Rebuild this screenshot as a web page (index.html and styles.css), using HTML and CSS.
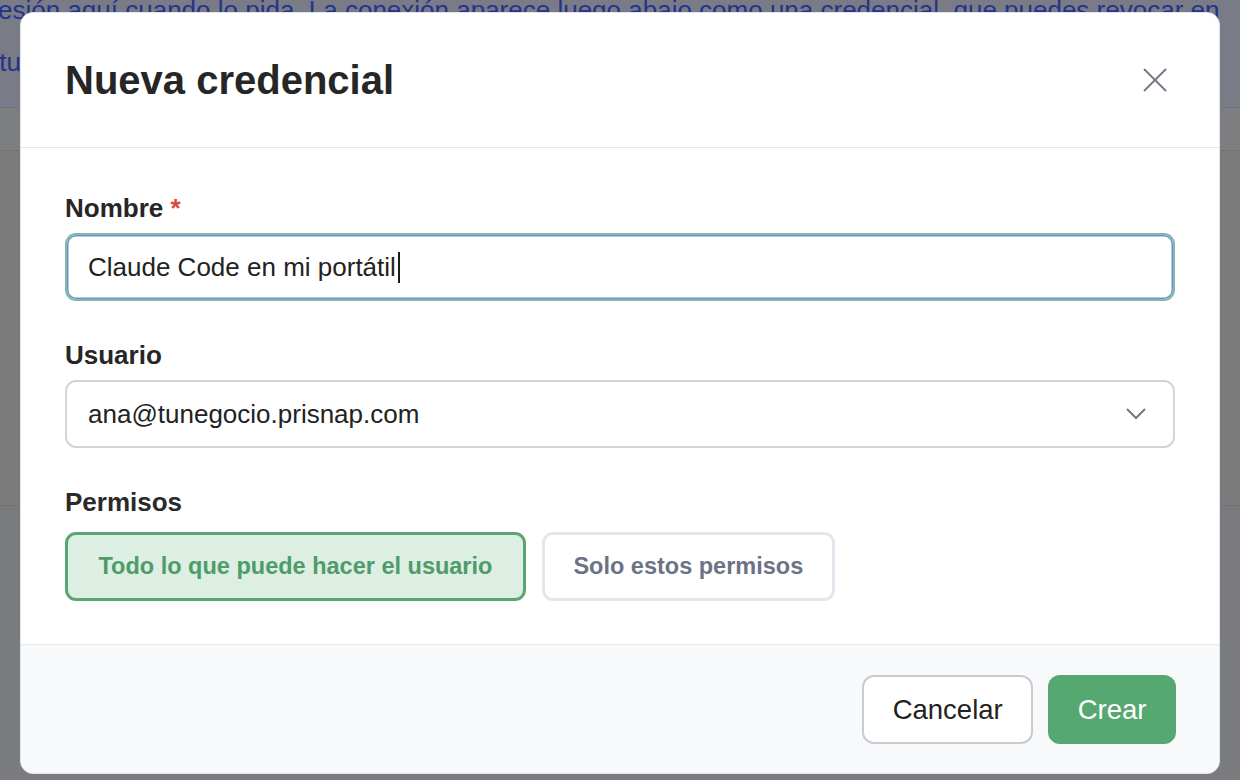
FILE: index.html
```html
<!DOCTYPE html>
<html lang="es">
<head>
<meta charset="utf-8">
<title>Nueva credencial</title>
<link rel="stylesheet" href="styles.css">
</head>
<body>
<div class="page">
  <div class="notice">
    <p class="notice-line first">esión aquí cuando lo pida. La conexión aparece luego abajo como una credencial, que puedes revocar en</p>
    <p class="notice-line second">ftu panel cuando quieras.</p>
  </div>
  <div class="table-head"></div>
  <div class="table-body"></div>
</div>

<div class="modal" role="dialog" aria-labelledby="modal-title">
  <header class="modal-header">
    <h2 id="modal-title" class="modal-title">Nueva credencial</h2>
    <button class="close-btn" aria-label="Cerrar">
      <svg width="24" height="24" viewBox="0 0 24 24" fill="none" stroke="currentColor" stroke-width="1.8" stroke-linecap="round">
        <line x1="1.5" y1="1.5" x2="22.5" y2="22.5"/>
        <line x1="22.5" y1="1.5" x2="1.5" y2="22.5"/>
      </svg>
    </button>
  </header>

  <div class="modal-body">
    <div class="field">
      <div class="label">Nombre <span class="req">*</span></div>
      <div class="input focused">Claude Code en mi portátil<span class="caret"></span></div>
    </div>
    <div class="field">
      <div class="label">Usuario</div>
      <div class="input select">
        <span>ana@tunegocio.prisnap.com</span>
        <svg class="chevron" width="20" height="12" viewBox="0 0 20 12" fill="none" stroke="currentColor" stroke-width="1.8" stroke-linecap="round" stroke-linejoin="round">
          <polyline points="1.5,1.5 10,10 18.5,1.5"/>
        </svg>
      </div>
    </div>
    <div class="field last">
      <div class="label legend">Permisos</div>
      <div class="pills">
        <button class="pill active">Todo lo que puede hacer el usuario</button>
        <button class="pill">Solo estos permisos</button>
      </div>
    </div>
  </div>

  <footer class="modal-footer">
    <button class="btn btn-secondary">Cancelar</button>
    <button class="btn btn-primary">Crear</button>
  </footer>
</div>
</body>
</html>
```

FILE: styles.css
```css
* { box-sizing: border-box; }

html, body {
  margin: 0;
  padding: 0;
}

body {
  width: 1240px;
  height: 780px;
  overflow: hidden;
  background: #7a7b7e;
  font-family: "Liberation Sans", Arial, Helvetica, sans-serif;
  position: relative;
}

/* dimmed page behind the dialog */
.page {
  width: 1240px;
}

.notice {
  height: 108px;
  background: #797c87;
  border-bottom: 1px solid #6c7390;
  overflow: hidden;
}

.notice-line {
  margin: 0;
  font-size: 26px;
  line-height: 52px;
  color: #25338a;
  white-space: nowrap;
}

.notice-line.first {
  margin-top: -16px;
  margin-left: -2px;
}

.notice-line.second {
  margin-left: -8px;
}

.table-head {
  height: 43px;
  background: #7d7e80;
  border-bottom: 1px solid #737478;
}

.table-body {
  height: 355px;
  background: #7b7b7c;
  border-bottom: 1px solid #727273;
}

/* dialog */
.modal {
  position: absolute;
  left: 20px;
  top: 12px;
  width: 1200px;
  background: #ffffff;
  border: 1px solid #e2e4ee;
  border-radius: 13px;
  overflow: hidden;
}

.modal-header {
  display: flex;
  align-items: center;
  justify-content: space-between;
  padding: 43px 44px;
  border-bottom: 1px solid #e6e8f1;
}

.modal-title {
  margin: 0;
  font-size: 40px;
  line-height: 48px;
  font-weight: 700;
  color: #262626;
}

.close-btn {
  width: 40px;
  height: 40px;
  padding: 8px;
  border: 0;
  background: transparent;
  color: #6f7683;
  display: flex;
  align-items: center;
  justify-content: center;
}

.modal-body {
  padding: 44px 44px 43px;
}

.field {
  margin-bottom: 38px;
}

.field.last {
  margin-bottom: 0;
}

.label {
  font-size: 26px;
  line-height: 32px;
  font-weight: 700;
  color: #262626;
  margin-bottom: 9px;
}

.label.legend {
  margin-bottom: 14px;
  color: #2a2a2a;
}

.req {
  color: #d8473f;
}

.input {
  height: 68px;
  border: 2px solid #d3d4d8;
  border-radius: 11px;
  padding: 0 21px;
  display: flex;
  align-items: center;
  font-size: 26px;
  color: #222222;
  background: #ffffff;
}

.input.focused {
  border-color: #85b9a6;
  box-shadow: inset 0 0 0 1.5px #6196dc;
}

.caret {
  display: inline-block;
  width: 2px;
  height: 31px;
  background: #1a1a1a;
  margin-left: 2px;
}

.select {
  justify-content: space-between;
  padding-right: 27px;
}

.chevron {
  color: #6b7280;
}

.pills {
  display: flex;
  gap: 16px;
}

.pill {
  height: 69px;
  padding: 0 28.5px;
  border: 3px solid #e2e6ed;
  border-radius: 11px;
  background: #ffffff;
  font-family: inherit;
  font-size: 23.5px;
  font-weight: 700;
  color: #6b7385;
}

.pill.active {
  padding: 0 30.5px;
  border-color: #5aa573;
  background: #dcefe2;
  color: #4f9b69;
}

.modal-footer {
  display: flex;
  justify-content: flex-end;
  gap: 15px;
  padding: 30px 43px 29px 44px;
  background: #f8f9fb;
  border-top: 1px solid #e5e7ec;
}

.btn {
  height: 69px;
  border: 2px solid transparent;
  border-radius: 12px;
  font-family: inherit;
  font-size: 27.5px;
  font-weight: 400;
}

.btn-secondary {
  padding: 0 28.5px;
  background: #ffffff;
  border-color: #c9cbd0;
  color: #222222;
}

.btn-primary {
  padding: 0 27.5px;
  background: #55a86f;
  border-color: #55a86f;
  color: #ffffff;
}
```
